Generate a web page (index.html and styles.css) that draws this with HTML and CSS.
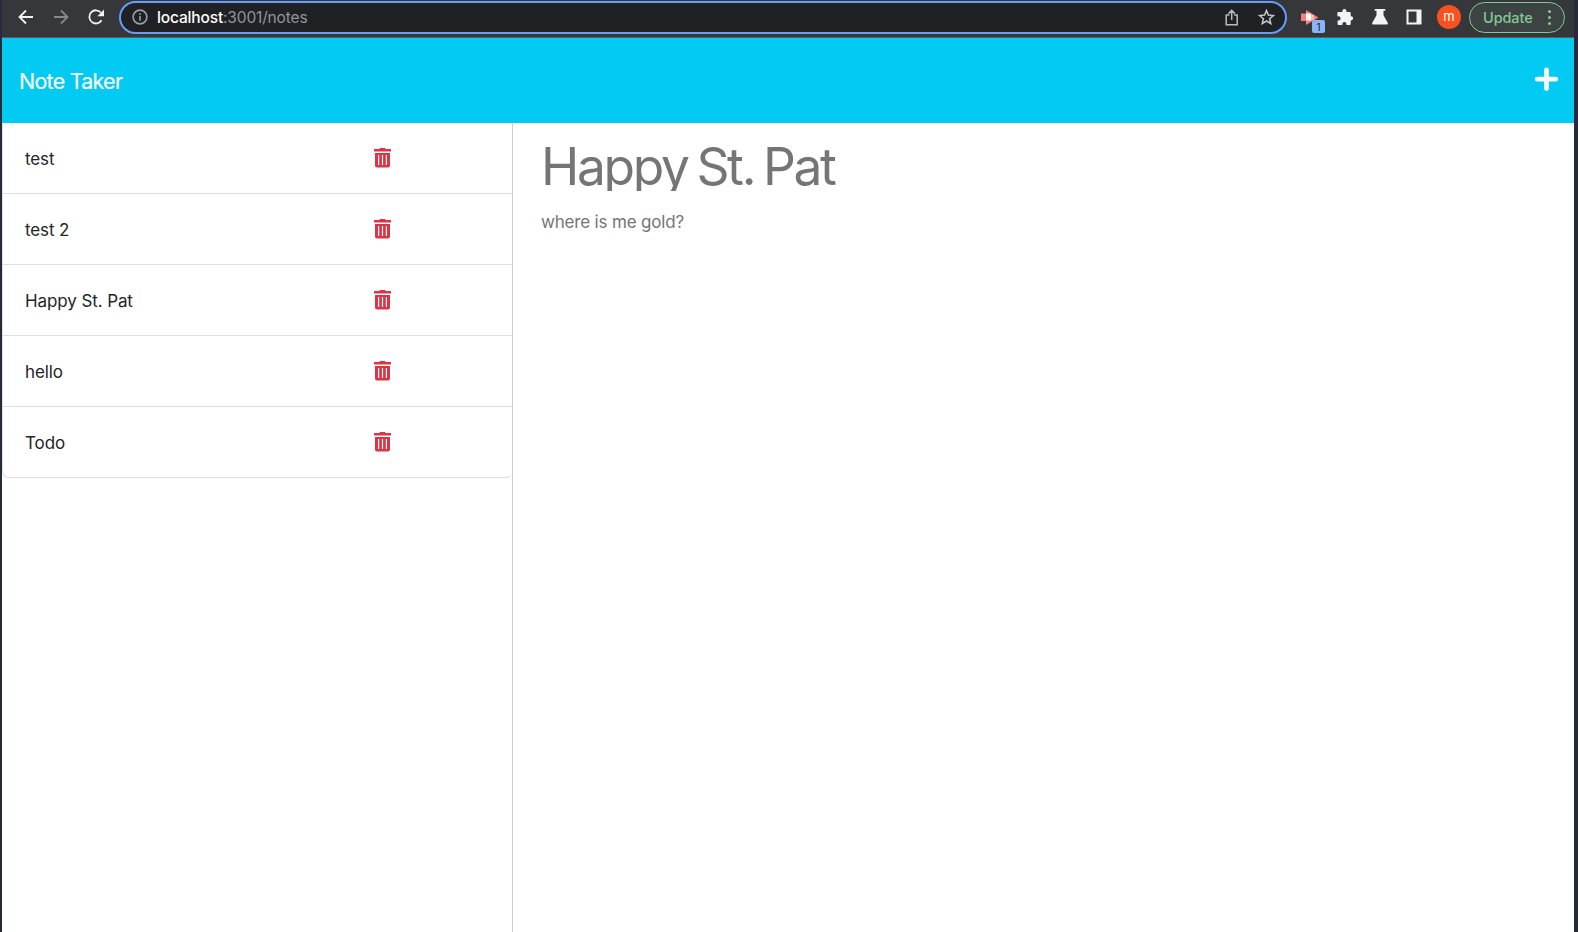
FILE: index.html
```html
<!DOCTYPE html>
<html lang="en">
<head>
<meta charset="utf-8">
<title>Note Taker</title>
<link rel="stylesheet" href="styles.css">
</head>
<body>
<svg class="defs" width="0" height="0"><symbol id="trash" viewBox="0 0 17 20"><path fill="currentColor" fill-rule="evenodd" d="M5.600 0h5.800v1.100H17v2.300H0V1.100h5.600zM1 4.900h15v12.600a1.900 1.900 0 0 1-1.900 1.900H2.900A1.900 1.900 0 0 1 1 17.500zM4 7v10h1.200V7zM7.900 7v10h1.200V7zM11.800 7v10H13V7z"/></symbol></svg>
<div class="window">
  <div class="toolbar">
    <div class="nav">
      <svg width="16" height="16" viewBox="0 0 16 16" class="line light"><path d="M15 8H2M8 1.500 1.500 8 8 14.500"/></svg>
      <svg width="16" height="16" viewBox="0 0 16 16" class="line dim"><path d="M1 8h13M8 1.500 14.500 8 8 14.500"/></svg>
      <svg width="17" height="16" viewBox="0 0 17 16" class="line light"><path d="M13.600 11.300A6.600 6.600 0 1 1 12.900 3.500"/><path class="solid" d="M16 .6v6.600H9.400z"/></svg>
    </div>
    <div class="address">
      <svg class="info" width="16" height="16" viewBox="0 0 16 16"><circle cx="8" cy="8" r="6.900"/><path d="M8 7.100v4.600M8 4.200v1.700"/></svg>
      <span class="url"><b>localhost</b>:3001/notes</span>
      <svg class="share" width="14" height="17" viewBox="0 0 14 17"><path d="M4.300 6H1.200v9.800h11V6H9.100M6.700 11V1.500M3.500 4.600l3.200-3.200 3.200 3.200"/></svg>
      <svg class="star" width="17" height="16" viewBox="0 0 17 16"><path d="m8.500 1.500 1.900 4.600 5 .4-3.800 3.200 1.200 4.900-4.300-2.600-4.300 2.600 1.200-4.900L1.600 6.500l5-.4z"/></svg>
    </div>
    <div class="extension">
      <svg width="18" height="15" viewBox="0 0 18 15"><path fill="#ff7c7c" d="M0 3.500h5V0l12.500 7.500L5 15v-4H0z"/><path fill="#fff" d="M5 3.500h5v7H5z"/><path fill="#ffb9b9" d="M10 5h3v5h-3z"/></svg>
      <span class="count">1</span>
    </div>
    <svg class="puzzle" width="16" height="16" viewBox="0 0 16 16"><path d="M1.300 3h4V2.200a2.100 2.100 0 0 1 4.200 0V3h3.200a1 1 0 0 1 1 1v3.200h.3a2.100 2.100 0 0 1 0 4.200h-.3V15a1 1 0 0 1-1 1H9.400v-1a2 2 0 0 0-4 0v1H1.600a1 1 0 0 1-1-1v-3.500h.9a2.100 2.100 0 0 0 0-4.200H.4V4a1 1 0 0 1 .9-1z"/></svg>
    <svg class="flask" width="16" height="16" viewBox="0 0 16 16"><path d="M2.700 0h10.600v1.800h-1.800v4.400l4.200 7.600c.5 1-.1 1.700-1 1.700H1.300c-.9 0-1.500-.8-1-1.700l4.200-7.600V1.800H2.700z"/></svg>
    <svg class="panel" width="16" height="16" viewBox="0 0 16 16"><path fill-rule="evenodd" d="M.5.500h15v15H.5zM2.500 2.500v11H10.500v-11z"/></svg>
    <span class="avatar">m</span>
    <div class="update"><span>Update</span><i class="dots"></i></div>
  </div>
  <header class="header">
    <h1 class="brand">Note Taker</h1>
    <svg width="24" height="24" viewBox="0 0 24 24"><path d="M12.500 3v18.500M3.200 12.200h18.500" fill="none" stroke="#f8f9fa" stroke-width="4.800" stroke-linecap="round"/></svg>
  </header>
  <main class="main">
    <aside class="sidebar">
      <ul class="notes">
        <li><span>test</span><svg class="trash"><use href="#trash"/></svg></li>
        <li><span>test 2</span><svg class="trash"><use href="#trash"/></svg></li>
        <li><span>Happy St. Pat</span><svg class="trash"><use href="#trash"/></svg></li>
        <li><span>hello</span><svg class="trash"><use href="#trash"/></svg></li>
        <li><span>Todo</span><svg class="trash"><use href="#trash"/></svg></li>
      </ul>
    </aside>
    <section class="editor">
      <div class="title">Happy St. Pat</div>
      <div class="text">where is me gold?</div>
    </section>
  </main>
</div>
</body>
</html>
```
FILE: styles.css
```css
* { box-sizing: border-box; }
body { margin: 0; background: #272a3a; font-family: Inter, "Liberation Sans", sans-serif; }
svg { display: block; flex: none; }
.defs { position: absolute; }
.window { height: 932px; margin: 0 4px 0 2px; display: flex; flex-direction: column; background: #fff; overflow: hidden; }
.toolbar { height: 38px; flex: none; display: flex; align-items: center; background: #36373a; border-bottom: 1px solid #5b5c5f; padding: 0 9px 3px 16px; }
.nav { display: flex; gap: 19px; width: 101px; }
.line { fill: none; stroke-width: 1.800; }
.light { stroke: #f1f3f4; }
.dim { stroke: #87888b; }
.solid { fill: #f1f3f4; stroke: none; }
.address { width: 1168px; height: 33px; border: 2px solid #669df6; border-radius: 17px; background: #202124; display: flex; align-items: center; padding: 0 10px 0 11px; }
.info { fill: none; stroke: #9aa0a6; stroke-width: 1.600; }
.url { margin-left: 9px; font-size: 15.500px; letter-spacing: -.15px; color: #939599; flex: 1; white-space: nowrap; }
.url b { font-weight: 500; color: #fff; }
.share { fill: none; stroke: #b9bbbe; stroke-width: 1.500; margin-right: 19px; }
.star { fill: none; stroke: #c4c6c9; stroke-width: 1.500; }
.extension { position: relative; margin-left: 14px; width: 23px; }
.count { position: absolute; left: 11px; top: 10px; width: 13px; height: 13px; border-radius: 2px; background: #8ab4f8; color: #202124; font-size: 10px; line-height: 14px; text-align: center; }
.puzzle, .flask, .panel { fill: #f1f3f4; }
.puzzle { margin-left: 13px; }
.flask { margin-left: 19px; }
.panel { margin-left: 18px; }
.avatar { width: 24px; height: 24px; margin-left: 15px; border-radius: 50%; background: #f9511f; color: #fff; font-size: 13px; line-height: 23px; text-align: center; }
.update { width: 96px; height: 31px; margin-left: 8px; border: 1px solid #81c995; border-radius: 16px; background: #3c4443; color: #81c995; font-size: 14.500px; font-weight: 500; letter-spacing: -.1px; display: flex; align-items: center; justify-content: space-between; padding: 1px 13px 0 13px; }
.dots { width: 3px; height: 3px; border-radius: 50%; background: #81c995; box-shadow: 0 -6px #81c995, 0 6px #81c995; }
.header { height: 85px; flex: none; background: #02caf2; display: flex; align-items: center; justify-content: space-between; padding: 0 16px 4px 17px; }
.brand { margin: 5px 0 0; color: #f8f9fa; font-size: 21.500px; font-weight: 400; letter-spacing: -.76px; -webkit-text-stroke: .2px #f8f9fa; }
.main { flex: 1; display: flex; }
.sidebar { width: 511px; flex: none; border-right: 1px solid #cfcfd1; }
.notes { list-style: none; margin: 0; padding: 0; border: 1px solid #dfdfdf; border-top: 0; border-right-color: transparent; border-radius: 0 0 6px 6px; }
.notes li { height: 71px; display: flex; align-items: center; border-bottom: 1px solid #dfdfdf; margin-right: -1px; padding-left: 22px; color: #212529; font-size: 17px; letter-spacing: -.1px; }
.notes li:last-child { height: 70px; border-bottom: 0; margin-right: 0; }
.notes span { width: 348.500px; padding-top: 2px; }
.trash { width: 17px; height: 20px; color: #dc3545; }
.editor { flex: 1; padding: 15px 28px; color: #757575; }
.title { height: 53px; line-height: 57px; overflow: hidden; font-size: 51.500px; letter-spacing: -2.300px; word-spacing: -3.500px; }
.text { margin-top: 19px; font-size: 17px; line-height: 24px; letter-spacing: -.18px; }
```
